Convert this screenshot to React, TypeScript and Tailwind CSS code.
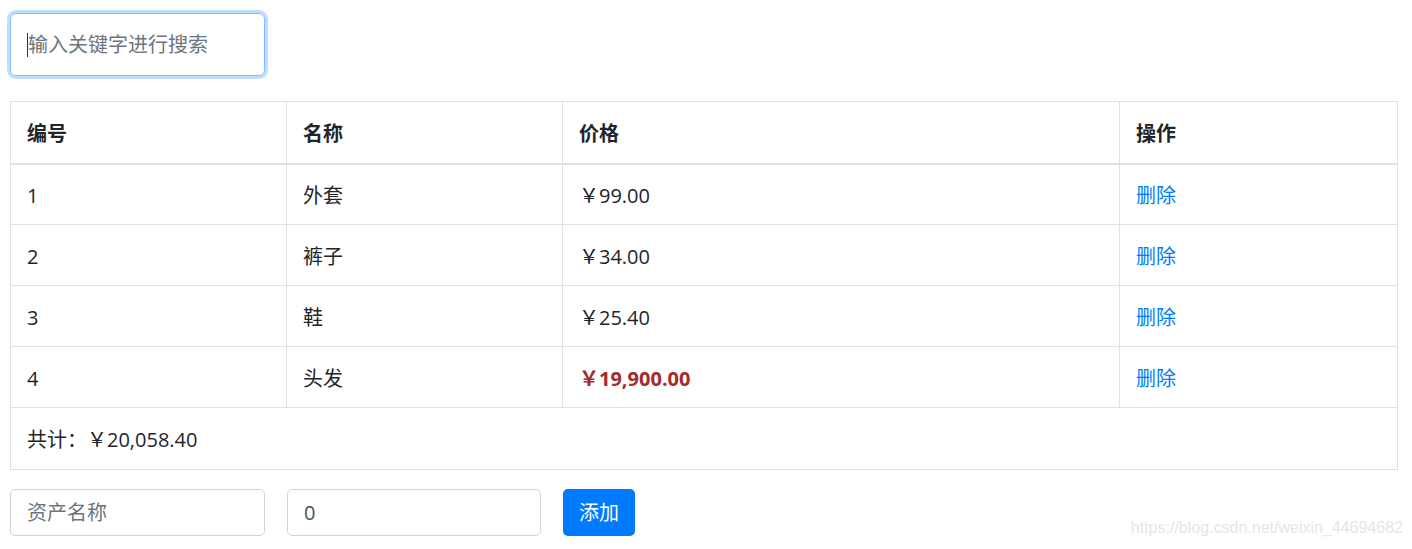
import React from 'react'

const font = { fontFamily: '"Open Sans", "Noto Sans CJK SC", sans-serif' }

const rows = [
  { id: 1, name: '外套', price: '￥99.00', hot: false },
  { id: 2, name: '裤子', price: '￥34.00', hot: false },
  { id: 3, name: '鞋', price: '￥25.40', hot: false },
  { id: 4, name: '头发', price: '￥19,900.00', hot: true },
]

const App = () => {
  return (
    <div className="relative w-[1412px] h-[549px] bg-white text-[#212529] overflow-hidden" style={font}>
      <div className="px-[10px] pt-[13px]">
        <div className="w-[255px] h-[63px] rounded-[6px] border border-[#80bdff] shadow-[0_0_0_3px_rgba(0,123,255,0.25)] flex items-center pl-[16px]">
          <span className="w-px h-[24px] bg-[#333]" />
          <span className="text-[20px] text-[#6c757d]">输入关键字进行搜索</span>
        </div>

        <table className="mt-[25px] w-[1387px] border-collapse border border-[#dee2e6] text-[20px] table-fixed">
          <colgroup>
            <col className="w-[276px]" />
            <col className="w-[276px]" />
            <col className="w-[557px]" />
            <col className="w-[278px]" />
          </colgroup>
          <thead>
            <tr className="h-[62px]">
              <th className="text-left font-bold px-[16px] pt-[3px] border border-[#dee2e6] border-b-2">编号</th>
              <th className="text-left font-bold px-[16px] pt-[3px] border border-[#dee2e6] border-b-2">名称</th>
              <th className="text-left font-bold px-[16px] pt-[3px] border border-[#dee2e6] border-b-2">价格</th>
              <th className="text-left font-bold px-[16px] pt-[3px] border border-[#dee2e6] border-b-2">操作</th>
            </tr>
          </thead>
          <tbody>
            {rows.map((r) => (
              <tr key={r.id} className="h-[61px]">
                <td className="px-[16px] pt-[3px] border border-[#dee2e6]">{r.id}</td>
                <td className="px-[16px] pt-[3px] border border-[#dee2e6]">{r.name}</td>
                <td className={r.hot ? 'px-[16px] pt-[3px] border border-[#dee2e6] text-[#a52a2a] font-bold' : 'px-[16px] pt-[3px] border border-[#dee2e6]'}>
                  {r.price}
                </td>
                <td className="px-[16px] pt-[3px] border border-[#dee2e6] text-[#007bff]">删除</td>
              </tr>
            ))}
            <tr className="h-[62px]">
              <td colSpan={4} className="px-[16px] pt-[3px] border border-[#dee2e6]">共计：￥20,058.40</td>
            </tr>
          </tbody>
        </table>

        <div className="mt-[19px] flex items-center gap-[22px]">
          <div className="w-[255px] h-[47px] rounded-[5px] border border-[#ced4da] flex items-center px-[16px] text-[20px] text-[#6c757d]">
            资产名称
          </div>
          <div className="w-[254px] h-[47px] rounded-[5px] border border-[#ced4da] flex items-center px-[16px] text-[20px] text-[#495057]">
            0
          </div>
          <button className="h-[47px] px-[16px] rounded-[5px] bg-[#007bff] text-white text-[20px]">添加</button>
        </div>
      </div>

      <div className="absolute right-[9px] bottom-[9px] text-[16px] text-[#e6e6e6]" style={{ fontFamily: '"Liberation Sans", sans-serif' }}>
        https://blog.csdn.net/weixin_44694682
      </div>
    </div>
  )
}

export default App
